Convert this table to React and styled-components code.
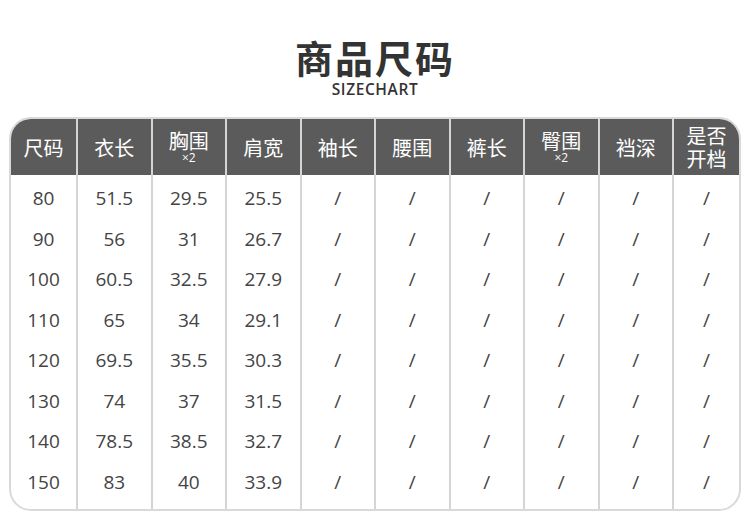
import React from "react";
import styled, { createGlobalStyle } from "styled-components";

const GlobalStyle = createGlobalStyle`
  body {
    margin: 0;
    background: #ffffff;
    font-family: "Open Sans", "Noto Sans CJK SC", sans-serif;
  }
`;

const columns = [
  { label: "尺码", values: ["80", "90", "100", "110", "120", "130", "140", "150"] },
  { label: "衣长", values: ["51.5", "56", "60.5", "65", "69.5", "74", "78.5", "83"] },
  { label: "胸围", note: "×2", values: ["29.5", "31", "32.5", "34", "35.5", "37", "38.5", "40"] },
  { label: "肩宽", values: ["25.5", "26.7", "27.9", "29.1", "30.3", "31.5", "32.7", "33.9"] },
  { label: "袖长" },
  { label: "腰围" },
  { label: "裤长" },
  { label: "臀围", note: "×2" },
  { label: "裆深" },
  { label: "是否", second: "开档" },
];

const Page = styled.div`
  width: 750px;
  height: 528px;
  padding-top: 38px;
  box-sizing: border-box;
`;

const Title = styled.h1`
  margin: 0;
  text-align: center;
  font-family: "Noto Sans CJK SC", sans-serif;
  font-weight: 700;
  font-size: 38px;
  line-height: 38px;
  color: #333333;
  letter-spacing: 2px;
`;

const Subtitle = styled.div`
  margin-top: 5px;
  text-align: center;
  font-family: "Open Sans", sans-serif;
  font-weight: 600;
  font-size: 15.5px;
  line-height: 16px;
  color: #333333;
  letter-spacing: 0.6px;
`;

const Table = styled.div`
  margin: 20px 9px 0;
  border: 2px solid #d9d9d9;
  border-radius: 22px;
  overflow: hidden;
  display: grid;
  grid-template-columns: 65px repeat(8, 74.5px) 67px;
`;

const Column = styled.div`
  display: flex;
  flex-direction: column;
  border-left: ${(p) => (p.$first ? "none" : "2px solid #d5d5d5")};
`;

const HeadCell = styled.div`
  height: 56px;
  background: #5b5b5b;
  color: #ffffff;
  display: flex;
  flex-direction: column;
  align-items: center;
  justify-content: center;
  font-family: "Noto Sans CJK SC", sans-serif;
  font-size: 20px;
  line-height: ${(p) => (p.$noted ? "19px" : "23px")};
`;

const Note = styled.span`
  font-family: "Open Sans", sans-serif;
  font-size: 12px;
  line-height: 12px;
  margin-top: 2px;
`;

const Body = styled.div`
  padding: 3px 0 7px;
  display: flex;
  flex-direction: column;
`;

const Cell = styled.div`
  height: 40.5px;
  display: flex;
  align-items: center;
  justify-content: center;
  font-size: 19px;
  color: #444444;
`;

export default function App() {
  return (
    <Page>
      <GlobalStyle />
      <Title>商品尺码</Title>
      <Subtitle>SIZECHART</Subtitle>
      <Table>
        {columns.map((col, i) => (
          <Column key={col.label} $first={i === 0}>
            <HeadCell $noted={!!col.note}>
              <span>{col.label}</span>
              {col.second && <span>{col.second}</span>}
              {col.note && <Note>{col.note}</Note>}
            </HeadCell>
            <Body>
              {(col.values || Array(8).fill("/")).map((v, j) => (
                <Cell key={j}>{v}</Cell>
              ))}
            </Body>
          </Column>
        ))}
      </Table>
    </Page>
  );
}
